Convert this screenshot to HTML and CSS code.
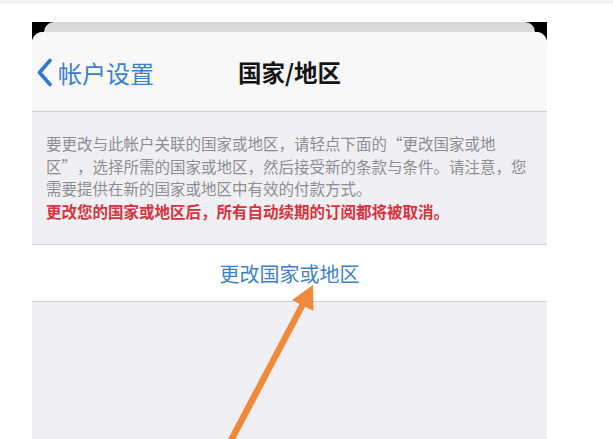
FILE: index.html
```html
<!DOCTYPE html>
<html lang="zh-CN">
<head>
<meta charset="utf-8">
<link rel="stylesheet" href="styles.css">
</head>
<body>
<div class="topstrip"></div>
<div class="stage">
  <div class="phone">
    <div class="backcard"></div>
    <div class="sheet">
      <div class="nav">
        <div class="back">
          <svg class="chev" width="17" height="29" viewBox="0 0 17 29"><path d="M14 2.5 L3.5 14.5 L14 26.5" fill="none" stroke="#2f7ad0" stroke-width="3.6" stroke-linecap="round" stroke-linejoin="round"/></svg>
          <span class="backlabel">帐户设置</span>
        </div>
        <div class="title">国家/地区</div>
        <div class="spacer"></div>
      </div>
      <div class="footer">
        <p class="note">要更改与此帐户关联的国家或地区，请轻点下面的<span class="q">“</span>更改国家或地<br>区<span class="q">”</span>，选择所需的国家或地区，然后接受新的条款与条件。请注意，您<br>需要提供在新的国家或地区中有效的付款方式。<br><span class="warn">更改您的国家或地区后，所有自动续期的订阅都将被取消。</span></p>
      </div>
      <div class="cell">更改国家或地区</div>
      <div class="rest"></div>
    </div>
  </div>
</div>
<svg class="arrow" width="613" height="439" viewBox="0 0 613 439">
  <line x1="227" y1="448" x2="303" y2="304" stroke="#f08a3a" stroke-width="6.5"/>
  <polygon points="313,285 292,300 313.5,311" fill="#f08a3a"/>
</svg>
</body>
</html>
```
FILE: styles.css
```css
html, body {
  margin: 0;
  padding: 0;
  background: #ffffff;
  width: 613px;
  height: 439px;
  overflow: hidden;
  font-family: "Noto Sans CJK SC", "Noto Sans", sans-serif;
}
.topstrip {
  height: 4px;
  background: #f3f3f3;
}
.stage {
  padding: 18px 66px 0 32px;
  height: 417px;
  box-sizing: border-box;
}
.phone {
  width: 515px;
  height: 417px;
  background: #000;
  display: flex;
  flex-direction: column;
}
.backcard {
  height: 12px;
  margin: 0 12px;
  background: linear-gradient(#d6d6d6, #dedede);
  border-radius: 10px 10px 0 0;
  flex: none;
}
.sheet {
  margin-top: -2px;
  flex: 1;
  background: #f0f0f4;
  border-radius: 11px 11px 0 0;
  display: flex;
  flex-direction: column;
  overflow: hidden;
}
.nav {
  height: 80px;
  box-sizing: border-box;
  padding-top: 2px;
  background: #f8f8f8;
  border-bottom: 1px solid #cfcfd2;
  display: grid;
  grid-template-columns: 1fr auto 1fr;
  align-items: center;
  flex: none;
}
.back {
  display: flex;
  align-items: center;
  padding-left: 4px;
  gap: 5px;
}
.chev {
  display: block;
}
.backlabel {
  font-size: 24px;
  color: #3a80cf;
  line-height: 1;
}
.title {
  font-size: 23.5px;
  font-weight: 700;
  color: #151515;
  line-height: 1;
}
.footer {
  height: 133px;
  box-sizing: border-box;
  padding: 20px 14px 0 14px;
  border-bottom: 1px solid #d4d4d8;
  flex: none;
}
.note {
  margin: 0;
  font-size: 15.5px;
  line-height: 22.7px;
  color: #8d8d92;
  white-space: nowrap;
}
.q {
  display: inline-block;
  width: 1em;
  text-align: center;
}
.warn {
  color: #d8323c;
  font-weight: 700;
}
.cell {
  height: 57px;
  background: #ffffff;
  border-bottom: 1px solid #cfcfd3;
  display: flex;
  align-items: center;
  justify-content: center;
  font-size: 20px;
  color: #3b82c8;
  flex: none;
  box-sizing: border-box;
}
.rest {
  flex: 1;
}
.arrow {
  position: absolute;
  left: 0;
  top: 0;
  pointer-events: none;
}
```
